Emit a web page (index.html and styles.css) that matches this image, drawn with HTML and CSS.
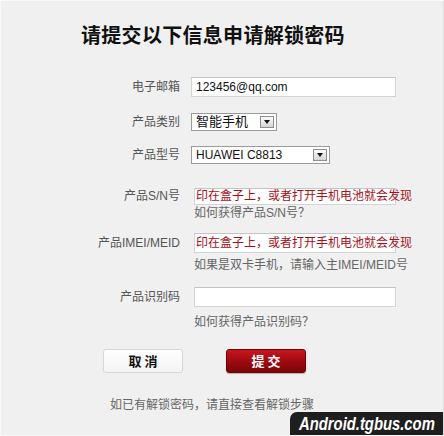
FILE: index.html
```html
<!DOCTYPE html>
<html lang="zh-CN">

<head>
	<meta charset="UTF-8">
	<title>申请解锁密码</title>
	<link rel="stylesheet" href="styles.css">
</head>

<body>
	<div class="page">
		<h1 class="title">请提交以下信息申请解锁密码</h1>

		<div class="form">
			<div class="row row-email">
				<span class="label">电子邮箱</span>
				<div class="field">
					<div class="input input-email">123456@qq.com</div>
				</div>
			</div>
			<div class="row row-type">
				<span class="label label-select">产品类别</span>
				<div class="field">
					<div class="select select-type">
						<span class="select-value cjk">智能手机</span>
						<span class="select-arrow"></span>
					</div>
				</div>
			</div>
			<div class="row row-model">
				<span class="label label-select">产品型号</span>
				<div class="field">
					<div class="select select-model">
						<span class="select-value">HUAWEI C8813</span>
						<span class="select-arrow"></span>
					</div>
				</div>
			</div>
			<div class="row row-sn">
				<span class="label label-sn">产品S/N号</span>
				<div class="field field-wide">
					<div class="input input-hint input-sn">印在盒子上，或者打开手机电池就会发现</div>
					<p class="help help-sn">如何获得产品S/N号？</p>
				</div>
			</div>
			<div class="row row-imei">
				<span class="label">产品IMEI/MEID</span>
				<div class="field field-wide">
					<div class="input input-hint">印在盒子上，或者打开手机电池就会发现</div>
					<p class="help help-imei">如果是双卡手机，请输入主IMEI/MEID号</p>
				</div>
			</div>
			<div class="row row-code">
				<span class="label">产品识别码</span>
				<div class="field field-wide">
					<div class="input"></div>
					<p class="help help-code">如何获得产品识别码？</p>
				</div>
			</div>
		</div>

		<div class="buttons">
			<button class="btn btn-cancel" type="button">取 消</button>
			<button class="btn btn-submit" type="button">提 交</button>
		</div>

		<p class="tip">如已有解锁密码，请直接查看解锁步骤</p>

		<div class="watermark"><span class="watermark-text">Android.tgbus.com</span></div>
	</div>
</body>

</html>
```

FILE: styles.css
```css
* {
	margin: 0;
	padding: 0;
	box-sizing: border-box;
}

html,
body {
	width: 444px;
	height: 436px;
	overflow: hidden;
	background: #f0f0f0;
}

body {
	font-family: "Liberation Sans", "Noto Sans CJK SC", sans-serif;
	font-size: 12px;
	color: #333;
}

.page {
	position: relative;
	width: 444px;
	height: 436px;
	overflow: hidden;
	border: 1px solid #fafafa;
	border-right-color: #ddd;
}

.title {
	padding: 23px 0 0 80px;
	font-size: 20px;
	line-height: 24px;
	font-weight: bold;
	color: #111;
	letter-spacing: 0.3px;
}

.form {
	margin-top: 29px;
}

.row {
	display: flex;
	align-items: flex-start;
}

.label {
	width: 179px;
	flex-shrink: 0;
	text-align: right;
	font-size: 12px;
	line-height: 20px;
	color: #555;
}

.label-select {
	line-height: 18px;
}

.label-sn {
	line-height: 17px;
}

.field {
	margin-left: 11px;
}

.field-wide {
	margin-left: 14px;
}

.input {
	width: 202px;
	height: 20px;
	padding: 0 4px;
	font-size: 12px;
	line-height: 18px;
	color: #111;
	white-space: nowrap;
	background: #fff;
	border: 1px solid #d4d4d4;
	border-top-color: #c4c4c4;
}

.input-email {
	width: 205px;
}

.input-sn {
	height: 17px;
	line-height: 15px;
}

.input-hint {
	padding: 0 1px;
	color: #a8101a;
}

.select {
	display: flex;
	align-items: center;
	justify-content: space-between;
	height: 18px;
	padding: 0 2px 0 4px;
	background: #fff;
	border: 1px solid #9a9a9a;
}

.select-type {
	width: 86px;
}

.select-model {
	width: 139px;
}

.select-value {
	font-size: 12px;
	line-height: 16px;
	color: #111;
}

.select-value.cjk {
	font-size: 13px;
}

.select-arrow {
	position: relative;
	width: 14px;
	height: 12px;
	background: linear-gradient(#fdfdfd, #d4d4d4);
	border: 1px solid #8e8e8e;
}

.select-arrow::after {
	content: "";
	position: absolute;
	top: 3px;
	left: 3px;
	border-left: 3px solid transparent;
	border-right: 3px solid transparent;
	border-top: 4px solid #111;
}

.row-type {
	margin-top: 16px;
}

.row-model {
	margin-top: 15px;
}

.row-sn {
	margin-top: 24px;
}

.row-imei {
	margin-top: 12px;
}

.row-code {
	margin-top: 14px;
}

.help {
	font-size: 12px;
	line-height: 16px;
	color: #666;
}

.help-imei {
	margin-top: 4px;
}

.help-code {
	margin-top: 7px;
}

.buttons {
	display: flex;
	gap: 43px;
	margin: 19px 0 0 102px;
}

.btn {
	width: 80px;
	height: 24px;
	font-family: "Noto Sans CJK SC", sans-serif;
	font-size: 13px;
	font-weight: bold;
	line-height: 22px;
	border-radius: 3px;
	cursor: pointer;
}

.btn-cancel {
	color: #111;
	background: linear-gradient(#fff, #f4f4f4);
	border: 1px solid #d6d6d6;
}

.btn-submit {
	color: #fff;
	background: linear-gradient(#c8161e, #9a0a10 55%, #7c0509);
	border: 1px solid #6e0307;
	box-shadow: 0 1px 1px rgba(0, 0, 0, 0.25);
}

.tip {
	margin: 24px 0 0 109px;
	font-size: 12px;
	line-height: 16px;
	color: #666;
}

.watermark {
	position: absolute;
	right: 0;
	bottom: 0;
	width: 153px;
	height: 23px;
	padding-left: 9px;
	line-height: 23px;
	background: #1e1e1e;
	border-radius: 7px 0 0 0;
	white-space: nowrap;
	overflow: hidden;
}

.watermark-text {
	display: inline-block;
	font-family: "Liberation Sans", sans-serif;
	font-size: 19px;
	font-weight: bold;
	font-style: italic;
	color: #fff;
	transform: scaleX(0.78);
	transform-origin: left center;
}
```
